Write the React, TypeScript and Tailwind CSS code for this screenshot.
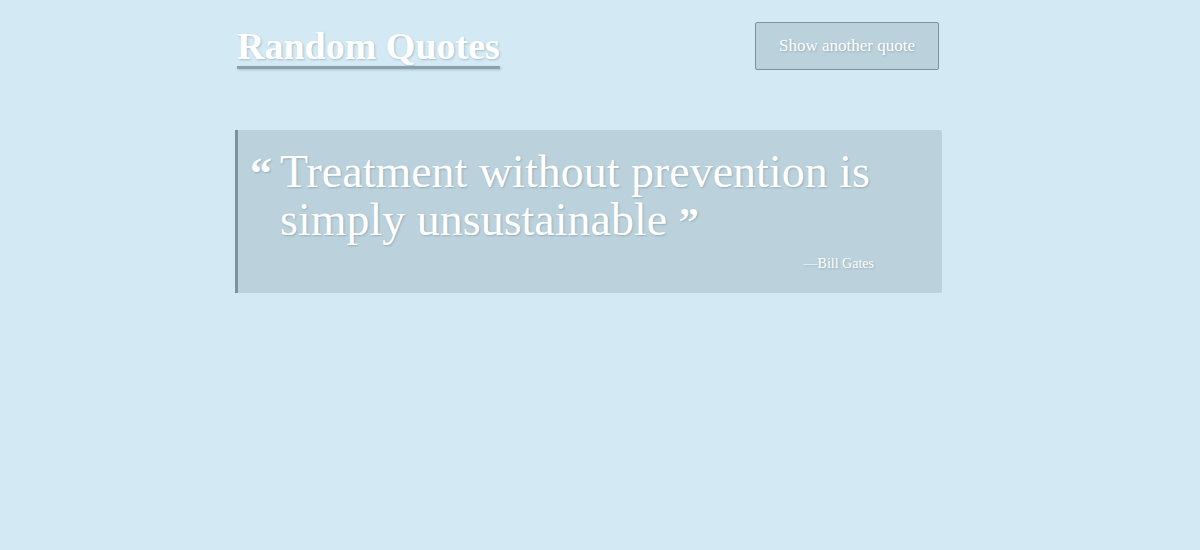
const quote = {
  text: "Treatment without prevention is simply unsustainable",
  author: "Bill Gates",
};

const shadow = "[text-shadow:1px_1px_2px_rgba(60,80,90,0.28)]";

export default function App() {
  return (
    <div className="min-h-[550px] w-full bg-[#d3e9f4] font-['Liberation_Serif',serif] text-white">
      <div className="ml-[235px] w-[707px] pt-[22px]">
        <header className="flex items-start justify-between pr-[3px]">
          <h1
            className={`pl-[2px] pt-[2px] text-[38px] font-bold leading-[44px] underline decoration-[#8ba1ab] decoration-[3px] underline-offset-[7px] ${shadow}`}
          >
            Random Quotes
          </h1>
          <button
            className={`h-[48px] w-[184px] rounded-[2px] border border-[#7d929b] bg-[#bbd2dd] text-[17px] text-white ${shadow}`}
          >
            Show another quote
          </button>
        </header>

        <section className="mt-[60px] rounded-r-[2px] border-l-[3px] border-[#7d929b] bg-[#bbd2dd] pb-[19px] pl-[12px] pt-[18px]">
          <div className="flex">
            <span
              className={`w-[30px] shrink-0 pt-[6px] text-[44px] font-bold leading-[40px] ${shadow}`}
            >
              &ldquo;
            </span>
            <p className={`w-[600px] text-[46px] leading-[48px] ${shadow}`}>
              {quote.text}{" "}
              <span className="text-[40px] font-bold leading-none">&rdquo;</span>
            </p>
          </div>
          <p
            className={`mt-[10px] w-[624px] text-right text-[14px] leading-[20px] ${shadow}`}
          >
            &mdash;{quote.author}
          </p>
        </section>
      </div>
    </div>
  );
}
